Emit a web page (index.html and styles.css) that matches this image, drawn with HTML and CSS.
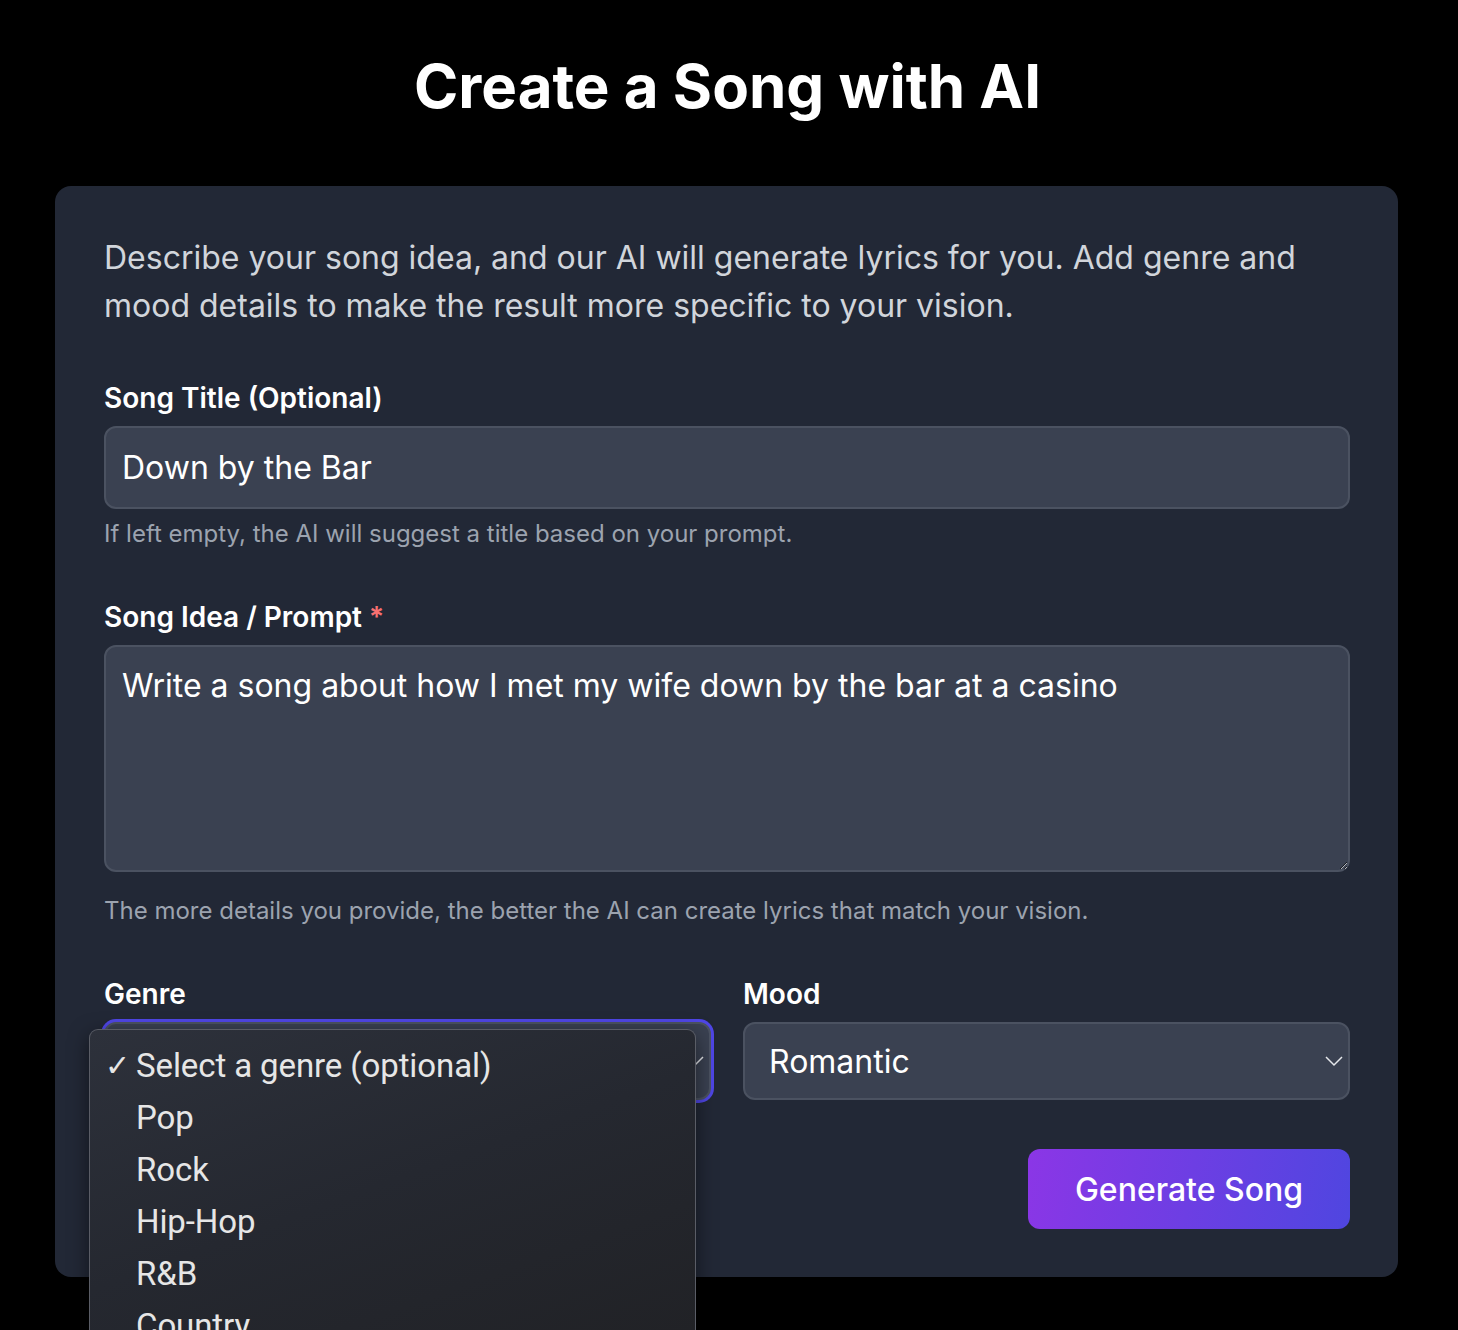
FILE: index.html
```html
<!DOCTYPE html>
<html lang="en">
<head>
  <meta charset="UTF-8">
  <title>Create a Song with AI</title>
  <meta name="viewport" content="width=device-width, initial-scale=1.0">
  <link rel="stylesheet" href="styles.css">
</head>
<body>
  <h1>Create a Song with AI</h1>
  <div class="card">
    <p class="intro">Describe your song idea, and our AI will generate lyrics for you. Add genre and mood details to make the result more specific to your vision.</p>

    <div class="field">
      <label for="title">Song Title (Optional)</label>
      <input type="text" id="title" value="Down by the Bar">
      <p class="hint">If left empty, the AI will suggest a title based on your prompt.</p>
    </div>

    <div class="field field-prompt">
      <label for="prompt">Song Idea / Prompt <span class="req">*</span></label>
      <textarea id="prompt">Write a song about how I met my wife down by the bar at a casino</textarea>
      <p class="hint hint-area">The more details you provide, the better the AI can create lyrics that match your vision.</p>
    </div>

    <div class="row">
      <div class="col">
        <label>Genre</label>
        <div class="select focused">
          <span>Select a genre (optional)</span>
          <svg class="chev" width="20" height="20" viewBox="0 0 20 20"><path d="M2 6l8 8 8-8" fill="none" stroke="#e5e7eb" stroke-width="1.5"/></svg>
          <ul class="popup">
            <li class="checked"><span class="tick">&#10003;</span>Select a genre (optional)</li>
            <li>Pop</li>
            <li>Rock</li>
            <li>Hip-Hop</li>
            <li>R&amp;B</li>
            <li>Country</li>
          </ul>
        </div>
      </div>
      <div class="col">
        <label>Mood</label>
        <div class="select">
          <span>Romantic</span>
          <svg class="chev" width="20" height="20" viewBox="0 0 20 20"><path d="M2 6l8 8 8-8" fill="none" stroke="#e5e7eb" stroke-width="1.5"/></svg>
        </div>
      </div>
    </div>

    <div class="actions">
      <button type="button">Generate Song</button>
    </div>
  </div>
</body>
</html>
```

FILE: styles.css
```css
body {
  margin: 0;
  background: #000;
  font-family: Inter, "Liberation Sans", sans-serif;
  color: #fff;
  overflow: hidden;
  height: 1330px;
}
h1 {
  margin: 0;
  padding-top: 56px;
  font-size: 60px;
  line-height: 60px;
  font-weight: 700;
  text-align: center;
  padding-right: 3px;
}
.card {
  margin: 70px 60px 0 55px;
  background: #222836;
  border-radius: 16px;
  padding: 48px 48px 48px 49px;
}
.intro {
  margin: 0;
  font-size: 32px;
  line-height: 48px;
  color: #d1d5db;
}
.field {
  margin-top: 52px;
}
.field-prompt {
  margin-top: 51px;
}
label {
  display: block;
  font-size: 28px;
  line-height: 32px;
  font-weight: 600;
  color: #fff;
  margin-bottom: 12px;
}
.req {
  color: #f87171;
}
input, textarea {
  box-sizing: border-box;
  width: 100%;
  display: block;
  background: #3a4151;
  border: 2px solid #4b5261;
  border-radius: 12px;
  color: #fff;
  font-family: inherit;
  font-size: 32px;
  padding: 0 16px;
  outline: none;
}
input {
  height: 83px;
}
textarea {
  height: 227px;
  padding-top: 18px;
  line-height: 42px;
  resize: vertical;
}
.hint {
  margin: 9px 0 0;
  font-size: 24px;
  line-height: 32px;
  color: #9ca3af;
}
.hint-area {
  margin-top: 23px;
}
.row {
  display: grid;
  grid-template-columns: 1fr 1fr;
  gap: 32px;
  margin-top: 51px;
}
.select {
  position: relative;
  box-sizing: border-box;
  height: 78px;
  display: flex;
  align-items: center;
  justify-content: space-between;
  background: #3a4151;
  border: 2px solid #4b5261;
  border-radius: 12px;
  padding: 0 4px 0 24px;
  font-size: 32px;
  color: #fff;
}
.select.focused {
  box-shadow: 0 0 0 3px #4f46e5;
}
.popup {
  position: absolute;
  left: -17px;
  top: 5px;
  width: 607px;
  height: 302px;
  box-sizing: border-box;
  margin: 0;
  padding: 10px 0 0;
  list-style: none;
  background: linear-gradient(160deg, #2d313b 0%, #252830 50%, #212226 100%);
  border: 1px solid #5a5d66;
  border-bottom: none;
  border-radius: 9px 9px 0 0;
  font-family: Roboto, "Liberation Sans", sans-serif;
  font-size: 33px;
  color: #e6e6e6;
  overflow: hidden;
  box-shadow: 0 6px 20px rgba(0,0,0,0.5);
}
.popup li {
  height: 52px;
  line-height: 52px;
  padding-left: 46px;
  position: relative;
  letter-spacing: -0.1px;
}
.tick {
  position: absolute;
  left: 15px;
  font-size: 30px;
}
.actions {
  display: flex;
  justify-content: flex-end;
  margin-top: 49px;
}
button {
  width: 322px;
  height: 80px;
  border: none;
  border-radius: 12px;
  background: linear-gradient(100deg, #8b36e6, #4f46e0);
  color: #fff;
  font-family: inherit;
  font-size: 32px;
  font-weight: 500;
  cursor: pointer;
}
```
